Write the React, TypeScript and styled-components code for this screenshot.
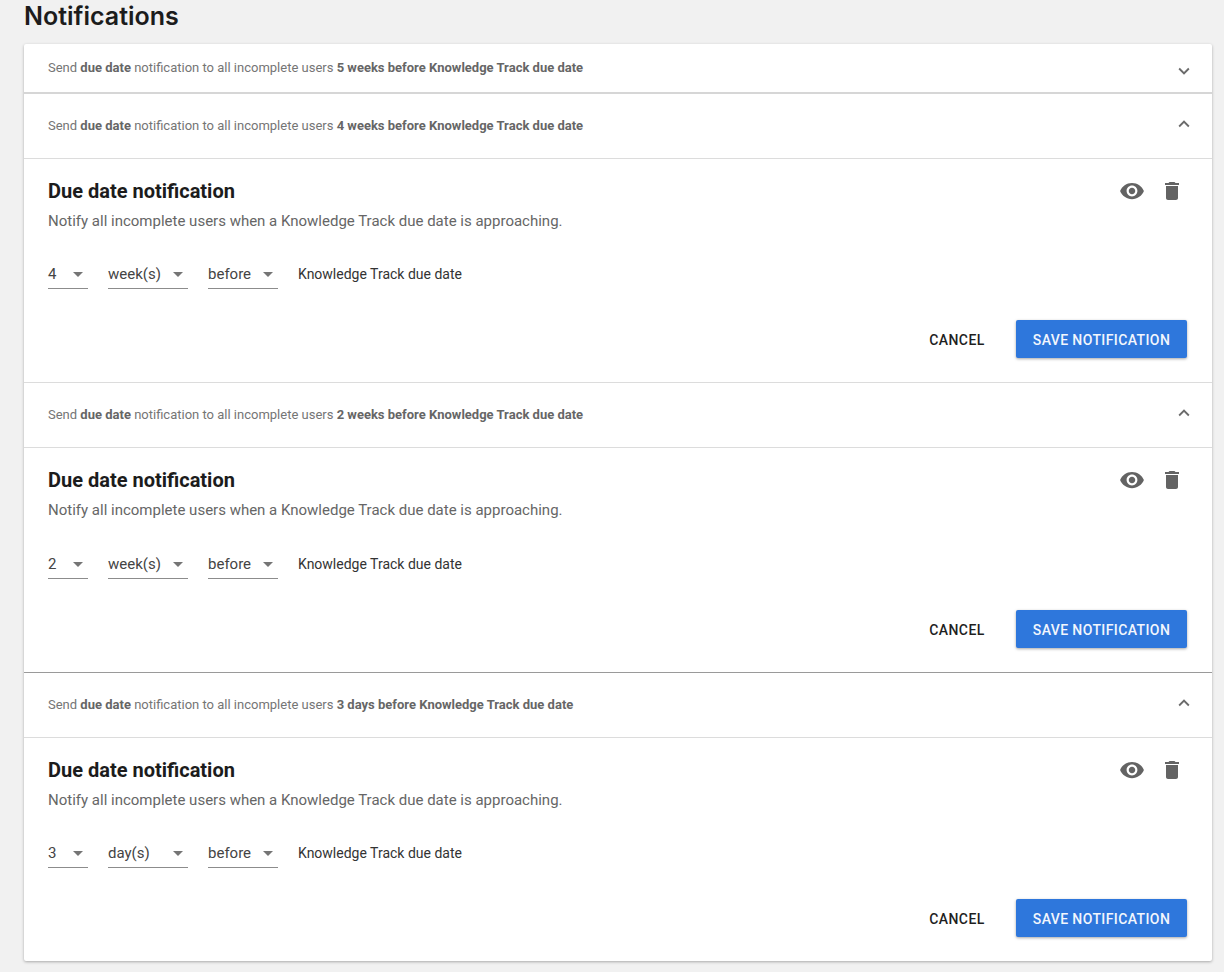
import React from 'react';
import styled, { createGlobalStyle } from 'styled-components';
import { MdDelete, MdExpandLess, MdExpandMore, MdVisibility } from 'react-icons/md';

const GlobalStyle = createGlobalStyle`
  html, body {
    margin: 0;
    padding: 0;
    background: #f1f1f1;
    font-family: Roboto, "Liberation Sans", sans-serif;
  }
  * {
    box-sizing: border-box;
  }
`;

const notifications = [
  { amount: '4', unit: 'week(s)', summary: '4 weeks' },
  { amount: '2', unit: 'week(s)', summary: '2 weeks' },
  { amount: '3', unit: 'day(s)', summary: '3 days' },
];

const Summary: React.FC<{ when: string }> = ({ when }) => (
  <SummaryText>
    Send <b>due date</b> notification to all incomplete users <b>{when} before Knowledge Track due date</b>
  </SummaryText>
);

const Select: React.FC<{ value: string; width: number }> = ({ value, width }) => (
  <SelectBox $width={width}>
    {value}
    <Caret />
  </SelectBox>
);

const App: React.FC = () => {
  return (
    <Page>
      <GlobalStyle />
      <Title>Notifications</Title>
      <Card>
        <CollapsedHeader>
          <Summary when="5 weeks" />
          <Chevron $shift={6}><MdExpandMore /></Chevron>
        </CollapsedHeader>
        {notifications.map((n, i) => (
          <Panel key={n.summary} $last={i === notifications.length - 1} $dark={i === 1}>
            <PanelHeader>
              <Summary when={n.summary} />
              <Chevron $shift={-4}><MdExpandLess /></Chevron>
            </PanelHeader>
            <PanelBody>
              <TopRow>
                <div>
                  <Heading>Due date notification</Heading>
                  <Description>Notify all incomplete users when a Knowledge Track due date is approaching.</Description>
                </div>
                <Actions>
                  <ActionIcon $size={26}><MdVisibility /></ActionIcon>
                  <ActionIcon $size={24}><MdDelete /></ActionIcon>
                </Actions>
              </TopRow>
              <FormRow $gap={i === 1 ? 29 : 28}>
                <Select value={n.amount} width={40} />
                <Select value={n.unit} width={80} />
                <Select value="before" width={70} />
                <FormLabel>Knowledge Track due date</FormLabel>
              </FormRow>
              <ButtonRow>
                <CancelButton>CANCEL</CancelButton>
                <SaveButton>SAVE NOTIFICATION</SaveButton>
              </ButtonRow>
            </PanelBody>
          </Panel>
        ))}
      </Card>
    </Page>
  );
};

const Page = styled.div`
  width: 1224px;
  height: 972px;
  padding: 0 12px 0 24px;
  overflow: hidden;
`;

const Title = styled.h1`
  margin: 0;
  height: 44px;
  padding-top: 1px;
  font-family: Inter, "Open Sans", sans-serif;
  font-size: 25px;
  line-height: 30px;
  font-weight: 600;
  color: #1c1c1c;
`;

const Card = styled.div`
  background: #fff;
  border-radius: 2px;
  box-shadow: 0 1px 3px rgba(0, 0, 0, 0.3);
`;

const CollapsedHeader = styled.div`
  height: 50px;
  padding: 0 17px 0 24px;
  display: flex;
  align-items: center;
  justify-content: space-between;
  border-bottom: 2px solid #d6d6d6;
`;

const Panel = styled.section<{ $last: boolean; $dark: boolean }>`
  height: ${({ $last, $dark }) => ($last ? '288px' : $dark ? '290px' : '289px')};
  border-bottom: ${({ $last, $dark }) => ($last ? '0' : $dark ? '1px solid #9a9a9a' : '1px solid #dcdcdc')};
`;

const PanelHeader = styled.div`
  height: 65px;
  padding: 0 17px 0 24px;
  display: flex;
  align-items: center;
  justify-content: space-between;
  border-bottom: 1px solid #dcdcdc;
`;

const SummaryText = styled.div`
  font-size: 13px;
  line-height: 16px;
  color: #757575;

  b {
    font-weight: 700;
    color: #666;
  }
`;

const Chevron = styled.span<{ $shift: number }>`
  display: flex;
  margin-top: ${({ $shift }) => $shift}px;
  font-size: 22px;
  color: #6b6b6b;
`;

const PanelBody = styled.div`
  padding: 19px 24px 0;
`;

const TopRow = styled.div`
  display: flex;
  justify-content: space-between;
  align-items: flex-start;
`;

const Heading = styled.h2`
  margin: 0;
  font-size: 20px;
  line-height: 26px;
  font-weight: 700;
  color: #1c1c1c;
`;

const Description = styled.p`
  margin: 7px 0 0;
  font-size: 15px;
  line-height: 20px;
  color: #666;
`;

const Actions = styled.div`
  display: flex;
  align-items: center;
  gap: 15px;
  padding: 0 4px 0 0;
  height: 26px;
`;

const ActionIcon = styled.span<{ $size: number }>`
  display: flex;
  font-size: ${({ $size }) => $size}px;
  color: #636363;
`;

const FormRow = styled.div<{ $gap: number }>`
  margin-top: ${({ $gap }) => $gap}px;
  display: flex;
  align-items: center;
  gap: 20px;
`;

const SelectBox = styled.div<{ $width: number }>`
  width: ${({ $width }) => $width}px;
  height: 30px;
  padding: 1px 5px 0 0;
  display: flex;
  align-items: center;
  justify-content: space-between;
  font-size: 15px;
  color: #444;
  border-bottom: 1px solid #8c8c8c;
`;

const Caret = styled.span`
  width: 0;
  height: 0;
  border-left: 5px solid transparent;
  border-right: 5px solid transparent;
  border-top: 5px solid #757575;
`;

const FormLabel = styled.span`
  font-size: 14px;
  color: #333;
`;

const ButtonRow = styled.div`
  margin-top: 31px;
  padding-right: 1px;
  display: flex;
  justify-content: flex-end;
  align-items: center;
  gap: 19px;
`;

const BaseButton = styled.button`
  height: 38px;
  padding: 2px 0 0;
  border: 0;
  border-radius: 2px;
  font-family: Roboto, sans-serif;
  font-size: 14px;
  font-weight: 500;
  letter-spacing: 0.4px;
`;

const CancelButton = styled(BaseButton)`
  width: 80px;
  background: transparent;
  color: #1f1f1f;
`;

const SaveButton = styled(BaseButton)`
  width: 171px;
  background: #2e77dc;
  color: #f2f6fd;
  box-shadow: 0 1px 3px rgba(0, 0, 0, 0.35);
`;

export default App;
